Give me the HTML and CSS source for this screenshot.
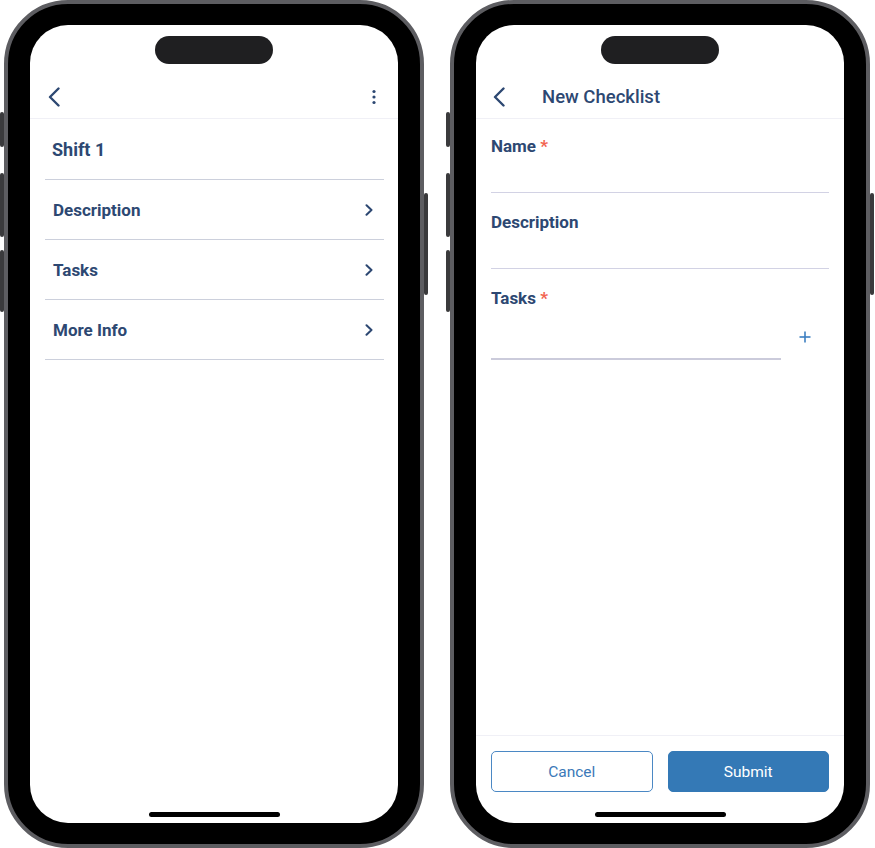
FILE: index.html
```html
<!DOCTYPE html>
<html lang="en">
<head>
<meta charset="utf-8">
<title>Checklist screens</title>
<link rel="stylesheet" href="styles.css">
</head>
<body>
<div class="stage">
  <div class="phone">
    <span class="hw hw-mute"></span>
    <span class="hw hw-vol-up"></span>
    <span class="hw hw-vol-down"></span>
    <span class="hw hw-power"></span>
    <div class="screen">
      <div class="status"><div class="island"></div></div>
      <div class="appbar">
        <svg class="back" width="12" height="20" viewBox="0 0 12 20"><polyline points="10.5,1.5 2,10 10.5,18.5" fill="none" stroke="#2d4872" stroke-width="2.4" stroke-linecap="round" stroke-linejoin="round"/></svg>
        <svg class="kebab" width="4" height="16" viewBox="0 0 4 16"><circle cx="2" cy="2.5" r="1.6" fill="#2d4872"/><circle cx="2" cy="8" r="1.6" fill="#2d4872"/><circle cx="2" cy="13.5" r="1.6" fill="#2d4872"/></svg>
      </div>
      <div class="content">
        <div class="list">
          <div class="row row-title">Shift 1</div>
          <div class="row"><span>Description</span><svg width="8" height="12" viewBox="0 0 8 12"><polyline points="1.5,1.2 6.5,6 1.5,10.8" fill="none" stroke="#2d4872" stroke-width="2" stroke-linecap="round" stroke-linejoin="round"/></svg></div>
          <div class="row"><span>Tasks</span><svg width="8" height="12" viewBox="0 0 8 12"><polyline points="1.5,1.2 6.5,6 1.5,10.8" fill="none" stroke="#2d4872" stroke-width="2" stroke-linecap="round" stroke-linejoin="round"/></svg></div>
          <div class="row"><span>More Info</span><svg width="8" height="12" viewBox="0 0 8 12"><polyline points="1.5,1.2 6.5,6 1.5,10.8" fill="none" stroke="#2d4872" stroke-width="2" stroke-linecap="round" stroke-linejoin="round"/></svg></div>
        </div>
      </div>
      <div class="homebar"></div>
    </div>
  </div>

  <div class="phone">
    <span class="hw hw-mute"></span>
    <span class="hw hw-vol-up"></span>
    <span class="hw hw-vol-down"></span>
    <span class="hw hw-power"></span>
    <div class="screen">
      <div class="status"><div class="island"></div></div>
      <div class="appbar appbar-titled">
        <svg class="back" width="12" height="20" viewBox="0 0 12 20"><polyline points="10.5,1.5 2,10 10.5,18.5" fill="none" stroke="#2d4872" stroke-width="2.4" stroke-linecap="round" stroke-linejoin="round"/></svg>
        <span class="title">New Checklist</span>
      </div>
      <div class="content">
        <div class="form">
          <div class="field">
            <div class="field-label">Name <span class="req">*</span></div>
            <div class="field-input"></div>
          </div>
          <div class="field">
            <div class="field-label">Description</div>
            <div class="field-input"></div>
          </div>
          <div class="field">
            <div class="field-label">Tasks <span class="req">*</span></div>
            <div class="task-row">
              <div class="task-input"></div>
              <div class="add"><svg width="12" height="12" viewBox="0 0 12 12"><line x1="6" y1="0.5" x2="6" y2="11.5" stroke="#3d7fc1" stroke-width="1.6"/><line x1="0.5" y1="6" x2="11.5" y2="6" stroke="#3d7fc1" stroke-width="1.6"/></svg></div>
            </div>
          </div>
        </div>
      </div>
      <div class="footer">
        <button class="btn btn-cancel">Cancel</button>
        <button class="btn btn-submit">Submit</button>
      </div>
      <div class="homebar"></div>
    </div>
  </div>
</div>
</body>
</html>
```

FILE: styles.css
```css
* { box-sizing: border-box; }

body {
  margin: 0;
  background: #ffffff;
  font-family: Roboto, "Liberation Sans", Arial, sans-serif;
  color: #2d4872;
}

.stage {
  display: flex;
  gap: 26px;
  padding-left: 4px;
  height: 848px;
}

.phone {
  position: relative;
  width: 420px;
  height: 848px;
  border: 4px solid #5d5d61;
  border-radius: 64px;
  background: #000;
  padding: 21px 22px;
  flex-shrink: 0;
}

.hw {
  position: absolute;
  width: 4px;
  background: #3a3a3c;
  border-radius: 2px;
}
.hw-mute { left: -8px; top: 108px; height: 35px; }
.hw-vol-up { left: -8px; top: 169px; height: 64px; }
.hw-vol-down { left: -8px; top: 246px; height: 62px; }
.hw-power { right: -8px; top: 189px; height: 102px; }

.screen {
  width: 368px;
  height: 798px;
  background: #fff;
  border-radius: 38px;
  overflow: hidden;
  display: flex;
  flex-direction: column;
}

.status {
  height: 50px;
  flex-shrink: 0;
  display: flex;
  justify-content: center;
}

.island {
  width: 118px;
  height: 28px;
  margin-top: 11px;
  border-radius: 14px;
  background: #1f1f21;
}

.appbar {
  height: 44px;
  flex-shrink: 0;
  border-bottom: 1px solid #f0f0f6;
  display: flex;
  align-items: center;
  justify-content: space-between;
  padding: 0 22px 0 18px;
}

.appbar-titled {
  justify-content: flex-start;
  padding-left: 17px;
}

.title {
  margin-left: 37px;
  font-size: 18.5px;
  font-weight: 500;
  color: #2d4872;
}

.content {
  flex: 1;
}

.list {
  padding: 0 14px 0 15px;
}

.row {
  height: 60px;
  border-bottom: 1px solid #ccd0dc;
  display: flex;
  align-items: center;
  justify-content: space-between;
  padding: 0 11px 0 8px;
  font-size: 17px;
  font-weight: 700;
}

.row-title {
  height: 61px;
  font-size: 18px;
  padding-left: 7px;
}

.form {
  padding: 17px 15px 0;
}

.field + .field {
  margin-top: 19px;
}

.field-label {
  font-size: 17px;
  font-weight: 700;
  line-height: 20px;
}

.req {
  color: #f26450;
}

.field-input {
  height: 37px;
  border-bottom: 1px solid #d2d2e4;
}

.task-row {
  display: flex;
}

.task-input {
  flex: 1;
  height: 52px;
  border-bottom: 2px solid #cbcbdb;
}

.add {
  width: 48px;
  display: flex;
  justify-content: center;
  padding-top: 23px;
}

.footer {
  flex-shrink: 0;
  border-top: 1px solid #f0f0f6;
  padding: 15px 15px 20px;
  display: flex;
  gap: 15px;
}

.btn {
  flex: 1;
  height: 41px;
  border-radius: 5px;
  font-family: Roboto, "Liberation Sans", Arial, sans-serif;
  font-size: 15.5px;
  font-weight: 400;
}

.btn-cancel {
  background: #fff;
  border: 1px solid #4b88c4;
  color: #3b79b8;
}

.btn-submit {
  background: #3479b6;
  border: 1px solid #3479b6;
  color: #fff;
}

.homebar {
  flex-shrink: 0;
  width: 131px;
  height: 5px;
  border-radius: 3px;
  background: #000;
  margin: 0 auto 6px;
}
```
